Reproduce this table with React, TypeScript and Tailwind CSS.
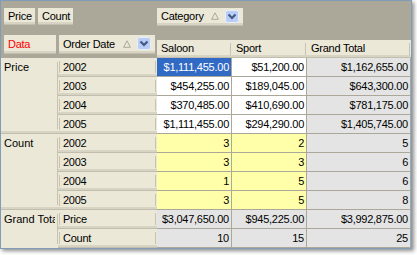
import React from "react";

type Kind = "price" | "count" | "total";

const groups: {
  name: string;
  kind: Kind;
  rows: { label: string; values: string[] }[];
}[] = [
  {
    name: "Price",
    kind: "price",
    rows: [
      { label: "2002", values: ["$1,111,455.00", "$51,200.00", "$1,162,655.00"] },
      { label: "2003", values: ["$454,255.00", "$189,045.00", "$643,300.00"] },
      { label: "2004", values: ["$370,485.00", "$410,690.00", "$781,175.00"] },
      { label: "2005", values: ["$1,111,455.00", "$294,290.00", "$1,405,745.00"] },
    ],
  },
  {
    name: "Count",
    kind: "count",
    rows: [
      { label: "2002", values: ["3", "2", "5"] },
      { label: "2003", values: ["3", "3", "6"] },
      { label: "2004", values: ["1", "5", "6"] },
      { label: "2005", values: ["3", "5", "8"] },
    ],
  },
  {
    name: "Grand Total",
    kind: "total",
    rows: [
      { label: "Price", values: ["$3,047,650.00", "$945,225.00", "$3,992,875.00"] },
      { label: "Count", values: ["10", "15", "25"] },
    ],
  },
];

const headerCell =
  "bg-[#ebe8d7] border-b border-[#c2beae] shadow-[inset_0_-2px_0_#d8d4c3]";

function SortMark() {
  return (
    <svg width="8" height="8" viewBox="0 0 8 8" className="shrink-0">
      <path d="M4 0.8 L7.4 7.3 L0.6 7.3 Z" fill="none" stroke="#aaa897" strokeWidth="1" />
    </svg>
  );
}

function DropButton() {
  return (
    <svg width="14" height="13" viewBox="0 0 14 13" className="shrink-0">
      <rect x="0.5" y="0.5" width="13" height="12" rx="2" fill="#b9cdf7" stroke="#e8eefc" />
      <path d="M3.5 4.5 L7 8 L10.5 4.5" fill="none" stroke="#445883" strokeWidth="2.2" />
    </svg>
  );
}

function FieldButton({
  label,
  className,
  red,
  menu,
}: {
  label: string;
  className: string;
  red?: boolean;
  menu?: boolean;
}) {
  return (
    <div className={`${headerCell} ${className} flex items-center pl-[4px] pr-[4px]`}>
      <span className={red ? "text-[#ff0000]" : "text-black"}>{label}</span>
      {menu && (
        <div className="ml-auto flex items-center gap-[6px] pb-[1px]">
          <SortMark />
          <DropButton />
        </div>
      )}
    </div>
  );
}

function Tick() {
  return <span className="w-px h-[12px] shrink-0 bg-[#c7c3b3]" />;
}

export default function App() {
  return (
    <div className="w-[417px] h-[255px] bg-white">
      <div className="w-[412px] h-[249px] border border-[#7f9db9] bg-[#aca899] shadow-[2px_2px_4px_rgba(0,0,0,0.45)] flex flex-col overflow-hidden font-['Liberation_Sans',Arial,sans-serif] text-[11px] tracking-[-0.25px] leading-none">
        {/* field area */}
        <div className="flex h-[57px]">
          <div className="w-[156px] flex flex-col">
            <div className="flex gap-[3px] pl-[3px] pt-[7px] h-[34px]">
              <FieldButton label="Price" className="w-[31px] h-[17px]" />
              <FieldButton label="Count" className="w-[35px] h-[17px]" />
            </div>
            <div className="flex gap-[3px] pl-[3px]">
              <FieldButton label="Data" red className="w-[52px] h-[19px]" />
              <FieldButton label="Order Date" menu className="w-[96px] h-[19px]" />
            </div>
          </div>
          <div className="flex-1 flex flex-col">
            <div className="h-[39px] pt-[7px]">
              <FieldButton label="Category" menu className="w-[86px] h-[18px]" />
            </div>
            <div className="flex h-[18px]">
              {[
                ["Saloon", "w-[75px]"],
                ["Sport", "w-[75px]"],
                ["Grand Total", "w-[104px]"],
              ].map(([t, w]) => (
                <div key={t} className={`${headerCell} ${w} flex items-center pl-[4px] pr-px`}>
                  <span className="flex-1">{t}</span>
                  <Tick />
                </div>
              ))}
            </div>
          </div>
        </div>

        {/* pivot body */}
        <div className="grid grid-cols-[57px_99px_75px_75px_104px] grid-rows-[repeat(10,19px)] bg-[#ebe8d7]">
          {groups.map((g) =>
            g.rows.map((r, ri) => (
              <React.Fragment key={g.name + r.label}>
                {ri === 0 && (
                  <div
                    className={`${
                      g.kind === "total" ? "row-span-2" : `row-span-4 ${headerCell}`
                    } flex overflow-hidden`}
                  >
                    <span className="flex-1 min-w-0 h-[19px] flex items-center pl-[3px] mr-[2px] whitespace-nowrap overflow-hidden tracking-normal">
                      {g.name}
                    </span>
                    <span className="w-px shrink-0 my-[4px] bg-[#c7c3b3]" />
                  </div>
                )}
                <div className={`${headerCell} flex items-center gap-[3px] pl-px pr-px`}>
                  <Tick />
                  <span className="flex-1">{r.label}</span>
                  <Tick />
                </div>
                {r.values.map((v, vi) => {
                  const selected = g.kind === "price" && ri === 0 && vi === 0;
                  let bg = "bg-white text-black";
                  if (g.kind === "count") bg = "bg-[#ffffaa] text-black";
                  if (g.kind === "total" || vi === 2) bg = "bg-[#e4e4e4] text-black";
                  if (selected) bg = "bg-[#316ac5] text-white";
                  return (
                    <div
                      key={vi}
                      className={`${bg} border-r border-b border-[#aca899] flex items-center justify-end pr-[2px]`}
                    >
                      {v}
                    </div>
                  );
                })}
              </React.Fragment>
            ))
          )}
        </div>
      </div>
    </div>
  );
}
